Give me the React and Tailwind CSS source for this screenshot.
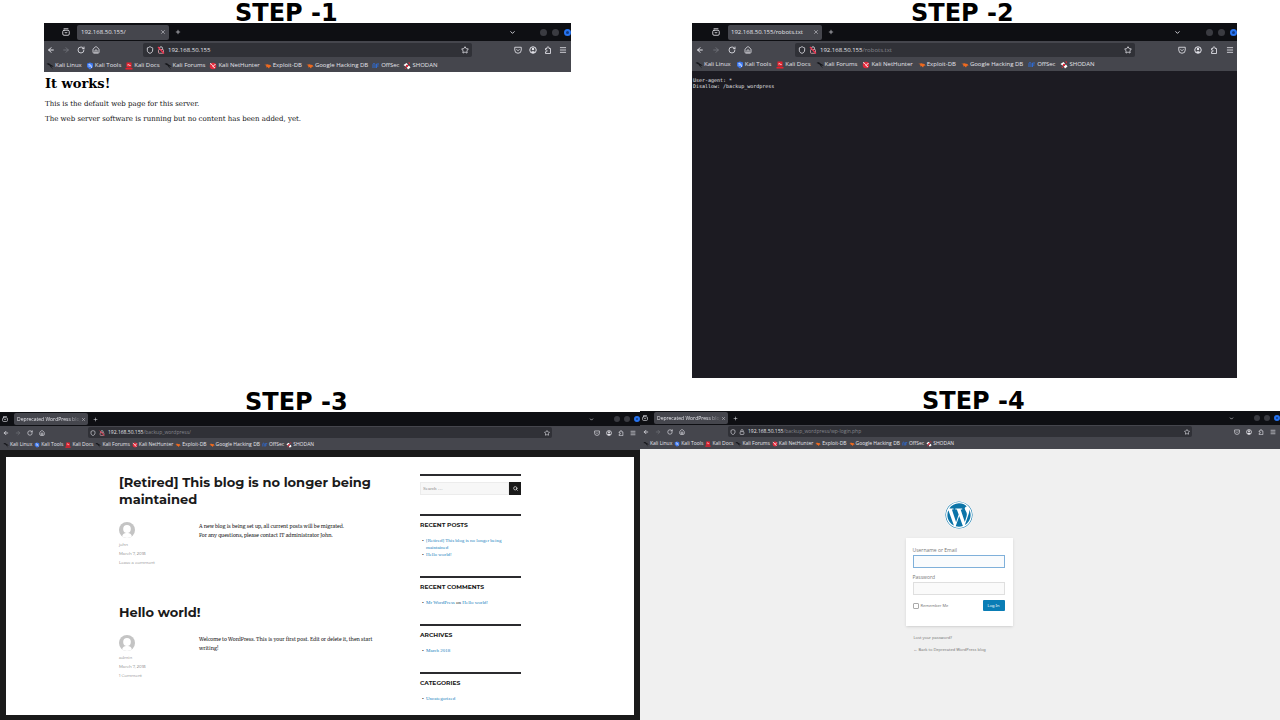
import React from "react";
import {
  ArrowLeft, ArrowRight, ChevronDown, House, Menu, Plus,
  RotateCw, Search, Shield, Star, X,
} from "lucide-react";
import { FaWordpress } from "react-icons/fa";

const SIZES = {
  md: {
    tabBar: "h-[18px] pl-[18px]",
    tabIcon: "size-2 mr-[7px]",
    tab: "h-[15px] w-[92px] gap-1 pl-1 pr-[3px] text-[6px] leading-[15px]",
    tabText: "",
    glyph: "size-[6px]",
    plus: "ml-[6px] size-[6px]",
    chevron: "size-[7px] mr-6",
    dots: "gap-[5px]",
    dot: "size-[7px]",
    bar: "h-[18px]",
    nav: "w-[99px] pl-[3px] gap-[7px]",
    right: "w-[99px] pr-1 gap-[7px]",
    icon: "size-2",
    url: "h-[14px] px-[3px] gap-[3px] text-[6px] leading-[14px]",
    marks: "h-[13px] pl-[2px] gap-1 text-[6px] leading-[13px]",
    mark: "gap-px",
    markIcon: "size-2",
  },
  lg: {
    tabBar: "h-[18px] pl-5",
    tabIcon: "size-2 mr-2",
    tab: "h-[15px] w-[94px] gap-1 pl-[3px] pr-[3px] text-[6px] leading-[15px]",
    tabText: "",
    glyph: "size-[6px]",
    plus: "ml-[6px] size-[6px]",
    chevron: "size-[7px] mr-[25px]",
    dots: "gap-[5px]",
    dot: "size-[7px]",
    bar: "h-[17px]",
    nav: "w-[103px] pl-1 gap-2",
    right: "w-[102px] pr-[3px] gap-2",
    icon: "size-2",
    url: "h-[14px] px-[3px] gap-[3px] text-[6px] leading-[14px]",
    marks: "h-[13px] pl-[3px] gap-[5px] text-[6px] leading-[13px]",
    mark: "gap-px",
    markIcon: "size-2",
  },
  sm: {
    tabBar: "h-[14px] pl-[2px]",
    tabIcon: "size-[6px] mr-[6px]",
    tab: "h-3 w-[74px] pl-[3px] pr-[2px] text-[5px] leading-3",
    tabText: "[mask-image:linear-gradient(to_right,black_80%,transparent)]",
    glyph: "size-[5px]",
    plus: "ml-[5px] size-[5px]",
    chevron: "size-[5px] mr-5",
    dots: "gap-1",
    dot: "size-[6px]",
    bar: "h-[13px]",
    nav: "w-[88px] pl-[3px] gap-[6px]",
    right: "w-[88px] pr-1 gap-[6px]",
    icon: "size-[6px]",
    url: "h-[11px] px-[2px] gap-[3px] text-[5px] leading-[11px]",
    marks: "h-[11px] pl-[3px] gap-[2px] text-[5px] leading-[11px]",
    mark: "gap-px",
    markIcon: "size-[6px]",
  },
};

const Svg = ({ className, children }) => (
  <svg viewBox="0 0 16 16" className={className} fill="none" aria-hidden="true">{children}</svg>
);

const ViewIcon = ({ className }) => (
  <Svg className={className}>
    <g stroke="currentColor" strokeWidth="1.7" strokeLinecap="round">
      <path d="M4 1.5h8" />
      <rect x="1.5" y="4.5" width="13" height="10" rx="2.5" />
      <path d="M5.5 8.5c1 2 4 2 5 0" />
    </g>
  </Svg>
);

const LockIcon = ({ className, slash }) => (
  <Svg className={className}>
    <path d="M5 7V4.5a3 3 0 0 1 6 0V7" stroke="#d8d8de" strokeWidth="1.7" />
    <rect x="3" y="7" width="10" height="7.5" rx="1.5" stroke={slash ? "#e0a0aa" : "#d8d8de"} strokeWidth="1.7" />
    {slash && <path d="M2 2 14 15" stroke="#f0324e" strokeWidth="2.5" />}
  </Svg>
);

const PocketIcon = ({ className }) => (
  <Svg className={className}>
    <path d="M1.500 2.500h13V8a6.500 6.500 0 0 1-13 0Z" stroke="currentColor" strokeWidth="1.700" strokeLinejoin="round" />
    <path d="m5 6.500 3 3 3-3" stroke="currentColor" strokeWidth="1.700" />
  </Svg>
);

const AccountIcon = ({ className }) => (
  <Svg className={className}>
    <circle cx="8" cy="8" r="6.500" stroke="currentColor" strokeWidth="2" />
    <circle cx="8" cy="6" r="2.500" fill="currentColor" />
    <path d="M3.500 12.500c1-3 8-3 9 0L8 14.500Z" fill="currentColor" />
  </Svg>
);

const ExtensionIcon = ({ className }) => (
  <Svg className={className}>
    <path
      d="M3 5h3V3.500a2 2 0 0 1 4 0V5h3v10H3v-3.500h1.500a1.700 1.700 0 0 0 0-3.500H3Z"
      stroke="currentColor" strokeWidth="1.700" strokeLinejoin="round"
    />
  </Svg>
);

const Dragon = ({ className }) => (
  <Svg className={className}>
    <path d="M1 3c4-1 7 0 9 3 3 0 4 2 5 4-2-1-4-1-5-1 1 2 3 3 4 6-2-3-5-4-6-7C6 6 4 5 1 5l3-1Z" fill="#15161a" />
  </Svg>
);
const Tools = ({ className }) => (
  <Svg className={className}>
    <path d="M2 3 8 1l6 2v7l-6 5-6-5Z" fill="#3b76ee" />
    <path d="M5 5c3-1 5 1 5 3s1 3 2 4M5 8h4" stroke="#fff" strokeWidth="1.6" />
  </Svg>
);
const Docs = ({ className }) => (
  <Svg className={className}>
    <path d="M3 1h10v10H3ZM1 12h14v3H1Z" fill="#e5222f" />
    <path d="M5 6c3-2 4 2 6 1" stroke="#fff" strokeWidth="1.800" />
  </Svg>
);
const Hunter = ({ className }) => (
  <Svg className={className}>
    <circle cx="8" cy="8" r="6.500" fill="#e12a3c" />
    <path d="M2 3c3 1 5 3 6 6M13 4 8 9l4 3" stroke="#fff" strokeWidth="1.800" />
  </Svg>
);
const Exploit = ({ className }) => (
  <Svg className={className}>
    <path d="M1 5c3 1 4-1 7 0l5 1 2 4-3-1-2 4-3-3-3 1 1-3Z" fill="#ef6a1f" />
  </Svg>
);
const OffSec = ({ className }) => (
  <Svg className={className}>
    <path d="M2 12V5a2 2 0 0 1 4 0v7M9 12V4h5M9 8h4" stroke="#2f6ad0" strokeWidth="2" />
  </Svg>
);
const Shodan = ({ className }) => (
  <Svg className={className}>
    <path d="m1 6 6-4 3 3-5 4ZM7 10l5-3 3 4-5 4Z" fill="#fff" />
    <circle cx="8" cy="8" r="2.500" fill="#e0283a" />
    <path d="M10 1h4v4ZM3 10l4 4H4Z" fill="#e0283a" />
  </Svg>
);

const BOOKMARKS = [
  ["Kali Linux", Dragon], ["Kali Tools", Tools], ["Kali Docs", Docs],
  ["Kali Forums", Dragon], ["Kali NetHunter", Hunter], ["Exploit-DB", Exploit],
  ["Google Hacking DB", Exploit], ["OffSec", OffSec], ["SHODAN", Shodan],
];

const IconButton = ({ label, className = "", children }) => (
  <button type="button" aria-label={label} className={`shrink-0 ${className}`}>{children}</button>
);

function Chrome({ size, tab, host, path, slash = true }) {
  const s = SIZES[size];
  const field = "min-w-0 flex-1 bg-transparent outline-none";
  return (
    <header className="overflow-hidden bg-[#45464d] font-['Open_Sans',sans-serif] text-[#e4e4ea]">
      <div className={`flex items-center bg-[#0e0f13] ${s.tabBar}`}>
        <IconButton label="Recent browsing"><ViewIcon className={s.tabIcon} /></IconButton>
        <div className={`flex items-center rounded-[2px] bg-[#45464d] ${s.tab}`}>
          <span className={`min-w-0 flex-1 overflow-hidden whitespace-nowrap ${s.tabText}`}>{tab}</span>
          <IconButton label="Close tab"><X className={s.glyph} /></IconButton>
        </div>
        <IconButton label="New tab"><Plus className={s.plus} strokeWidth={2.5} /></IconButton>
        <div className="ml-auto flex items-center">
          <IconButton label="List all tabs"><ChevronDown className={s.chevron} strokeWidth={3} /></IconButton>
          <div className={`flex items-center ${s.dots}`}>
            <IconButton label="Minimize" className={`rounded-full bg-[#3a3b41] ${s.dot}`} />
            <IconButton label="Maximize" className={`rounded-full bg-[#3a3b41] ${s.dot}`} />
            <IconButton label="Close window" className={`rounded-full border-2 border-[#2673f0] bg-[#123a80] ${s.dot}`} />
          </div>
        </div>
      </div>
      <div className={`flex items-center ${s.bar}`}>
        <nav className={`flex shrink-0 items-center ${s.nav}`}>
          <IconButton label="Back"><ArrowLeft className={s.icon} strokeWidth={3} /></IconButton>
          <IconButton label="Forward"><ArrowRight className={`text-[#75767d] ${s.icon}`} strokeWidth={2.5} /></IconButton>
          <IconButton label="Reload"><RotateCw className={s.icon} strokeWidth={2.5} /></IconButton>
          <IconButton label="Home"><House className={s.icon} strokeWidth={2.5} /></IconButton>
        </nav>
        <div className={`flex min-w-0 flex-1 items-center rounded-[2px] bg-[#303137] ${s.url}`}>
          <Shield className={s.icon} strokeWidth={2.5} />
          <LockIcon className={s.icon} slash={slash} />
          {path ? (
            <label className="flex min-w-0 flex-1">
              <span>{host}</span>
              <input aria-label={`Address on ${host}`} defaultValue={path} className={`text-[#85868d] ${field}`} />
            </label>
          ) : (
            <input aria-label="Address" defaultValue={host} className={field} />
          )}
          <IconButton label="Bookmark this page"><Star className={s.icon} strokeWidth={2.5} /></IconButton>
        </div>
        <div className={`flex shrink-0 items-center justify-end ${s.right}`}>
          <IconButton label="Save to Pocket"><PocketIcon className={s.icon} /></IconButton>
          <IconButton label="Account"><AccountIcon className={s.icon} /></IconButton>
          <IconButton label="Extensions"><ExtensionIcon className={s.icon} /></IconButton>
          <IconButton label="Menu"><Menu className={s.icon} strokeWidth={2.5} /></IconButton>
        </div>
      </div>
      <nav className={`flex items-center ${s.marks}`}>
        {BOOKMARKS.map(([name, Icon]) => (
          <a key={name} href="#" className={`flex shrink-0 items-center whitespace-nowrap ${s.mark}`}>
            <Icon className={s.markIcon} />
            {name}
          </a>
        ))}
      </nav>
    </header>
  );
}

const Step = ({ n, className }) => (
  <h2 className={`h-[23px] font-['DejaVu_Sans',sans-serif] text-2xl leading-[27px] font-bold text-black ${className}`}>
    STEP -{n}
  </h2>
);

const Avatar = () => (
  <svg viewBox="0 0 16 16" className="size-4 rounded-full bg-[#c4c4c4]" aria-hidden="true">
    <ellipse cx="8" cy="7" rx="3.800" ry="4" fill="#fff" />
    <path d="M3 16c0-4 2-5 5-5s5 1 5 5Z" fill="#fff" />
  </svg>
);

const Post = ({ title, author, comments, children }) => (
  <article>
    <h1 className="font-['Montserrat',Inter,sans-serif] text-[13px] leading-[17px] font-bold text-[#1a1a1a]">{title}</h1>
    <div className="mt-[14px] flex">
      <div className="w-20 shrink-0 font-['Montserrat',Inter,sans-serif] text-[4px] leading-[9px] text-[#7a7a7a]">
        <Avatar />
        <a href="#" className="mt-[2px] block">{author}</a>
        <a href="#" className="block">March 7, 2018</a>
        <a href="#" className="block">{comments}</a>
      </div>
      <div className="pr-3 font-['Merriweather','DejaVu_Serif',serif] text-[5px] leading-[9px] text-[#1a1a1a]">{children}</div>
    </div>
  </article>
);

const Widget = ({ title, className, children }) => (
  <section className={`border-t-2 border-[#2b2b2e] ${className}`}>
    <h2 className="mt-[5px] font-['Montserrat',Inter,sans-serif] text-[6px] leading-[9px] font-bold text-[#1a1a1a]">{title}</h2>
    <ul className="mt-[7px] font-['Liberation_Serif',serif] text-[5px] leading-[7px] text-[#1a1a1a]">
      {children}
    </ul>
  </section>
);

const Item = ({ children }) => (
  <li className="flex">
    <span className="w-[6px] shrink-0 pl-[2px]" aria-hidden="true">•</span>
    <span>{children}</span>
  </li>
);

const BlueLink = ({ children }) => <a href="#" className="text-[#1a7fbd]">{children}</a>;

const Blog = () => (
  <div className="flex-1 bg-[#1a1a1a] px-[6px] pt-[7px] pb-[5px]">
    <div className="flex h-full bg-white pt-[17px] pl-[113px]">
      <main className="flex w-[281px] flex-col gap-[37px]">
        <Post title="[Retired] This blog is no longer being maintained" author="john" comments="Leave a comment">
          <p>A new blog is being set up, all current posts will be migrated.</p>
          <p>For any questions, please contact IT administrator John.</p>
        </Post>
        <Post title="Hello world!" author="admin" comments="1 Comment">
          <p>Welcome to WordPress. This is your first post. Edit or delete it, then start writing!</p>
        </Post>
      </main>
      <aside className="ml-5 w-[101px]">
        <form className="flex border-t-2 border-[#2b2b2e] pt-[6px]">
          <input
            aria-label="Search"
            placeholder="Search …"
            className="h-[13px] min-w-0 flex-1 border border-[#ececec] bg-[#f7f7f7] px-[2px] font-['Liberation_Serif',serif] text-[5px] placeholder:text-[#888]"
          />
          <button type="button" aria-label="Search" className="flex h-[13px] w-3 items-center justify-center bg-[#1a1a1a] text-white">
            <Search className="size-[5px]" strokeWidth={3} />
          </button>
        </form>
        <Widget title="RECENT POSTS" className="mt-[19px]">
          <Item><BlueLink>[Retired] This blog is no longer being maintained</BlueLink></Item>
          <Item><BlueLink>Hello world!</BlueLink></Item>
        </Widget>
        <Widget title="RECENT COMMENTS" className="mt-[18px]">
          <Item><BlueLink>Mr WordPress</BlueLink> on <BlueLink>Hello world!</BlueLink></Item>
        </Widget>
        <Widget title="ARCHIVES" className="mt-[18px]">
          <Item><BlueLink>March 2018</BlueLink></Item>
        </Widget>
        <Widget title="CATEGORIES" className="mt-[18px]">
          <Item><BlueLink>Uncategorized</BlueLink></Item>
        </Widget>
      </aside>
    </div>
  </div>
);

const Login = () => (
  <div className="flex flex-1 flex-col items-center bg-[#f0f0f0] pt-[52px] pr-[2px] font-['Open_Sans',sans-serif] text-[5px] leading-[7px] text-[#777]">
    <FaWordpress className="size-7 rounded-full bg-white text-[#0b74a8]" />
    <form className="mt-[9px] h-[88px] w-[107px] bg-white pt-2 pr-2 pl-[7px] shadow-sm">
      <label htmlFor="user" className="mt-px block">Username or Email</label>
      <input id="user" className="mt-px block h-[13px] w-full border border-[#7fb0da] bg-[#f9fbfd] px-[2px]" />
      <label htmlFor="pass" className="mt-[6px] block">Password</label>
      <input id="pass" type="password" className="mt-px block h-[13px] w-full border border-[#dfdfdf] bg-[#fafafa] px-[2px]" />
      <div className="mt-[5px] flex items-center justify-between font-['Noto_Sans',sans-serif] text-[4px]">
        <label className="flex items-center gap-[2px]">
          <input type="checkbox" className="size-[6px] appearance-none rounded-[1px] border border-[#aaa] bg-white" />
          Remember Me
        </label>
        <button type="button" className="h-[11px] w-[22px] rounded-[1px] bg-[#0a7db5] text-white">Log In</button>
      </div>
    </form>
    <div className="mt-2 flex w-[91px] flex-col gap-[5px] font-['Noto_Sans',sans-serif] text-[4px] whitespace-nowrap">
      <a href="#">Lost your password?</a>
      <a href="#">← Back to Deprecated WordPress blog</a>
    </div>
  </div>
);

export default function App() {
  return (
    <div className="grid min-h-screen grid-cols-2 grid-rows-[388px_1fr] bg-white">
      <section className="pr-[69px] pl-11">
        <Step n={1} className="pl-[191px]" />
        <Chrome size="md" tab="192.168.50.155/" host="192.168.50.155" />
        <div className="pl-px font-['DejaVu_Serif',serif] text-[7px] leading-[7px] text-[#111]">
          <h1 className="mt-1 text-[13px] leading-[15px] font-bold text-black">It works!</h1>
          <p className="mt-[10px]">This is the default web page for this server.</p>
          <p className="mt-2">The web server software is running but no content has been added, yet.</p>
        </div>
      </section>

      <section className="flex flex-col pr-[43px] pb-[10px] pl-[52px]">
        <Step n={2} className="pl-[219px]" />
        <Chrome size="lg" tab="192.168.50.155/robots.txt" host="192.168.50.155" path="/robots.txt" />
        <pre className="flex-1 bg-[#1c1b22] pt-[6px] pl-px font-['DejaVu_Sans_Mono',monospace] text-[5px] leading-[6px] text-[#e8e8ea]">
          {"User-agent: *\nDisallow: /backup_wordpress"}
        </pre>
      </section>

      <section className="flex flex-col pt-px">
        <Step n={3} className="pl-[245px]" />
        <Chrome size="sm" tab="Deprecated WordPress blog" host="192.168.50.155" path="/backup_wordpress/" />
        <Blog />
      </section>

      <section className="flex flex-col">
        <Step n={4} className="pl-[282px]" />
        <Chrome size="sm" tab="Deprecated WordPress blog" host="192.168.50.155" path="/backup_wordpress/wp-login.php" slash={false} />
        <Login />
      </section>
    </div>
  );
}
